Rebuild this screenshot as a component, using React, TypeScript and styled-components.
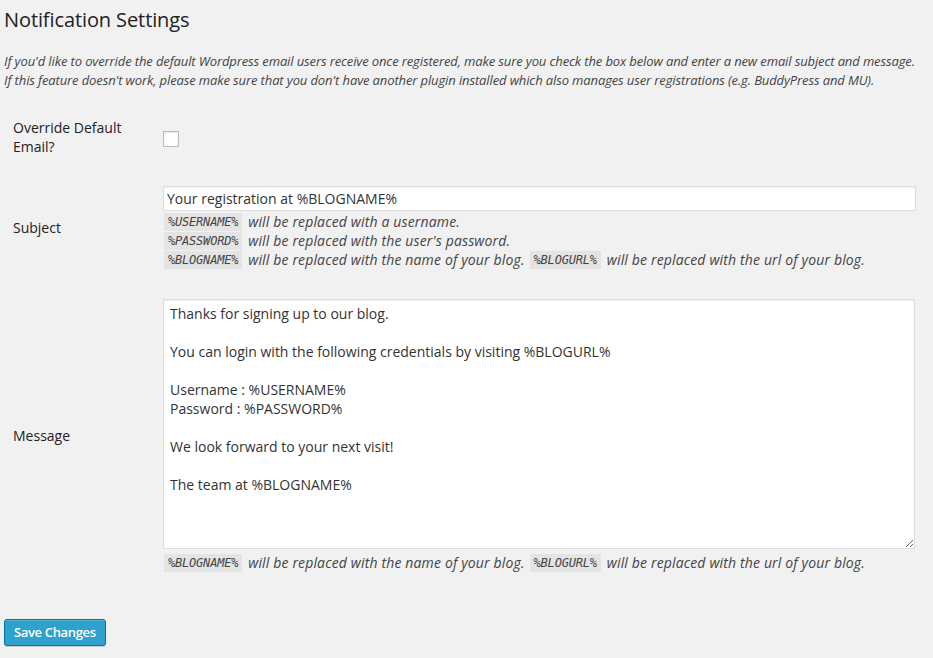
import React from "react";
import styled, { createGlobalStyle } from "styled-components";

const Global = createGlobalStyle`
  html, body { margin: 0; padding: 0; background: #f1f1f1; }
  body { font-family: "Open Sans", "Liberation Sans", sans-serif; color: #444; font-size: 13px; }
  * { box-sizing: border-box; }
`;

const Page = styled.div`
  padding: 0 17px 12px 4px;
`;

const Title = styled.h2`
  margin: 0;
  padding: 5px 0 0;
  font-size: 20px;
  font-weight: 400;
  line-height: 29px;
  color: #222;
  letter-spacing: -0.1px;
`;

const Intro = styled.p`
  margin: 18px 0 0;
  font-size: 13px;
  font-style: italic;
  line-height: 19px;
  color: #444;
  letter-spacing: -0.12px;
  white-space: nowrap;
`;

const FormGrid = styled.div`
  display: grid;
  grid-template-columns: 150px 1fr;
  align-items: center;
  margin: 13px 0 0 9px;
`;

const Label = styled.div`
  padding: 15px 0;
  font-size: 14px;
  line-height: 19px;
  color: #222;
`;

const Field = styled.div`
  padding: 15px 0;
`;

const Check = styled.span`
  display: block;
  width: 16px;
  height: 16px;
  margin-top: 3px;
  background: #fff;
  border: 1px solid #bbb;
  box-shadow: inset 0 1px 2px rgba(0, 0, 0, 0.1);
`;

const TextInput = styled.input`
  display: block;
  width: 100%;
  height: 25px;
  margin: 0 0 1px;
  padding: 2px 3px;
  border: 1px solid #ddd;
  background: #fff;
  box-shadow: inset 0 1px 2px rgba(0, 0, 0, 0.07);
  font-family: "Open Sans", "Liberation Sans", sans-serif;
  font-size: 14px;
  color: #333;
  outline: none;
`;

const TextArea = styled.textarea`
  display: block;
  width: calc(100% - 1px);
  height: 250px;
  margin: 0 0 4px;
  padding: 4px 6px 2px;
  border: 1px solid #ddd;
  background: #fff;
  box-shadow: inset 0 1px 2px rgba(0, 0, 0, 0.07);
  font-family: "Open Sans", "Liberation Sans", sans-serif;
  font-size: 14px;
  line-height: 19px;
  color: #333;
  resize: both;
  outline: none;
`;

const Hint = styled.div`
  font-size: 14px;
  font-style: italic;
  line-height: 19px;
  color: #444;
  letter-spacing: 0.15px;
  white-space: nowrap;
`;

const Code = styled.code`
  display: inline-block;
  padding: 0 4px;
  margin: 0 6px 0 1px;
  background: #e4e4e4;
  font-family: "DejaVu Sans Mono", "Liberation Mono", monospace;
  font-size: 12px;
  font-style: italic;
  line-height: 18px;
  letter-spacing: -0.2px;
  color: #444;
  vertical-align: 1px;
`;

const Gap = styled.span`
  display: inline-block;
  width: 4px;
`;

const SaveButton = styled.button`
  display: block;
  margin: 32px 0 0;
  height: 27px;
  padding: 0 9px 1px;
  background: #2ea2cc;
  border: 1px solid #0074a2;
  border-radius: 3px;
  box-shadow: inset 0 1px 0 rgba(120, 200, 230, 0.5), 0 1px 0 rgba(0, 0, 0, 0.15);
  color: #fff;
  font-family: "Open Sans", "Liberation Sans", sans-serif;
  font-size: 13px;
  font-weight: 600;
  letter-spacing: -0.35px;
  cursor: pointer;
`;

const message = `Thanks for signing up to our blog.

You can login with the following credentials by visiting %BLOGURL%

Username : %USERNAME%
Password : %PASSWORD%

We look forward to your next visit!

The team at %BLOGNAME%`;

export default function App() {
  return (
    <Page>
      <Global />
      <Title>Notification Settings</Title>
      <Intro>
        If you'd like to override the default Wordpress email users receive once registered, make sure you check the box below and enter a new email subject and message.
        <br />
        If this feature doesn't work, please make sure that you don't have another plugin installed which also manages user registrations (e.g. BuddyPress and MU).
      </Intro>
      <FormGrid>
        <Label>
          Override Default
          <br />
          Email?
        </Label>
        <Field>
          <Check />
        </Field>

        <Label>Subject</Label>
        <Field>
          <TextInput defaultValue="Your registration at %BLOGNAME%" />
          <Hint>
            <Code>%USERNAME%</Code>will be replaced with a username.
          </Hint>
          <Hint>
            <Code>%PASSWORD%</Code>will be replaced with the user's password.
          </Hint>
          <Hint>
            <Code>%BLOGNAME%</Code>will be replaced with the name of your blog.<Gap />
            <Code>%BLOGURL%</Code>will be replaced with the url of your blog.
          </Hint>
        </Field>

        <Label>Message</Label>
        <Field>
          <TextArea defaultValue={message} />
          <Hint>
            <Code>%BLOGNAME%</Code>will be replaced with the name of your blog.<Gap />
            <Code>%BLOGURL%</Code>will be replaced with the url of your blog.
          </Hint>
        </Field>
      </FormGrid>
      <SaveButton>Save Changes</SaveButton>
    </Page>
  );
}
